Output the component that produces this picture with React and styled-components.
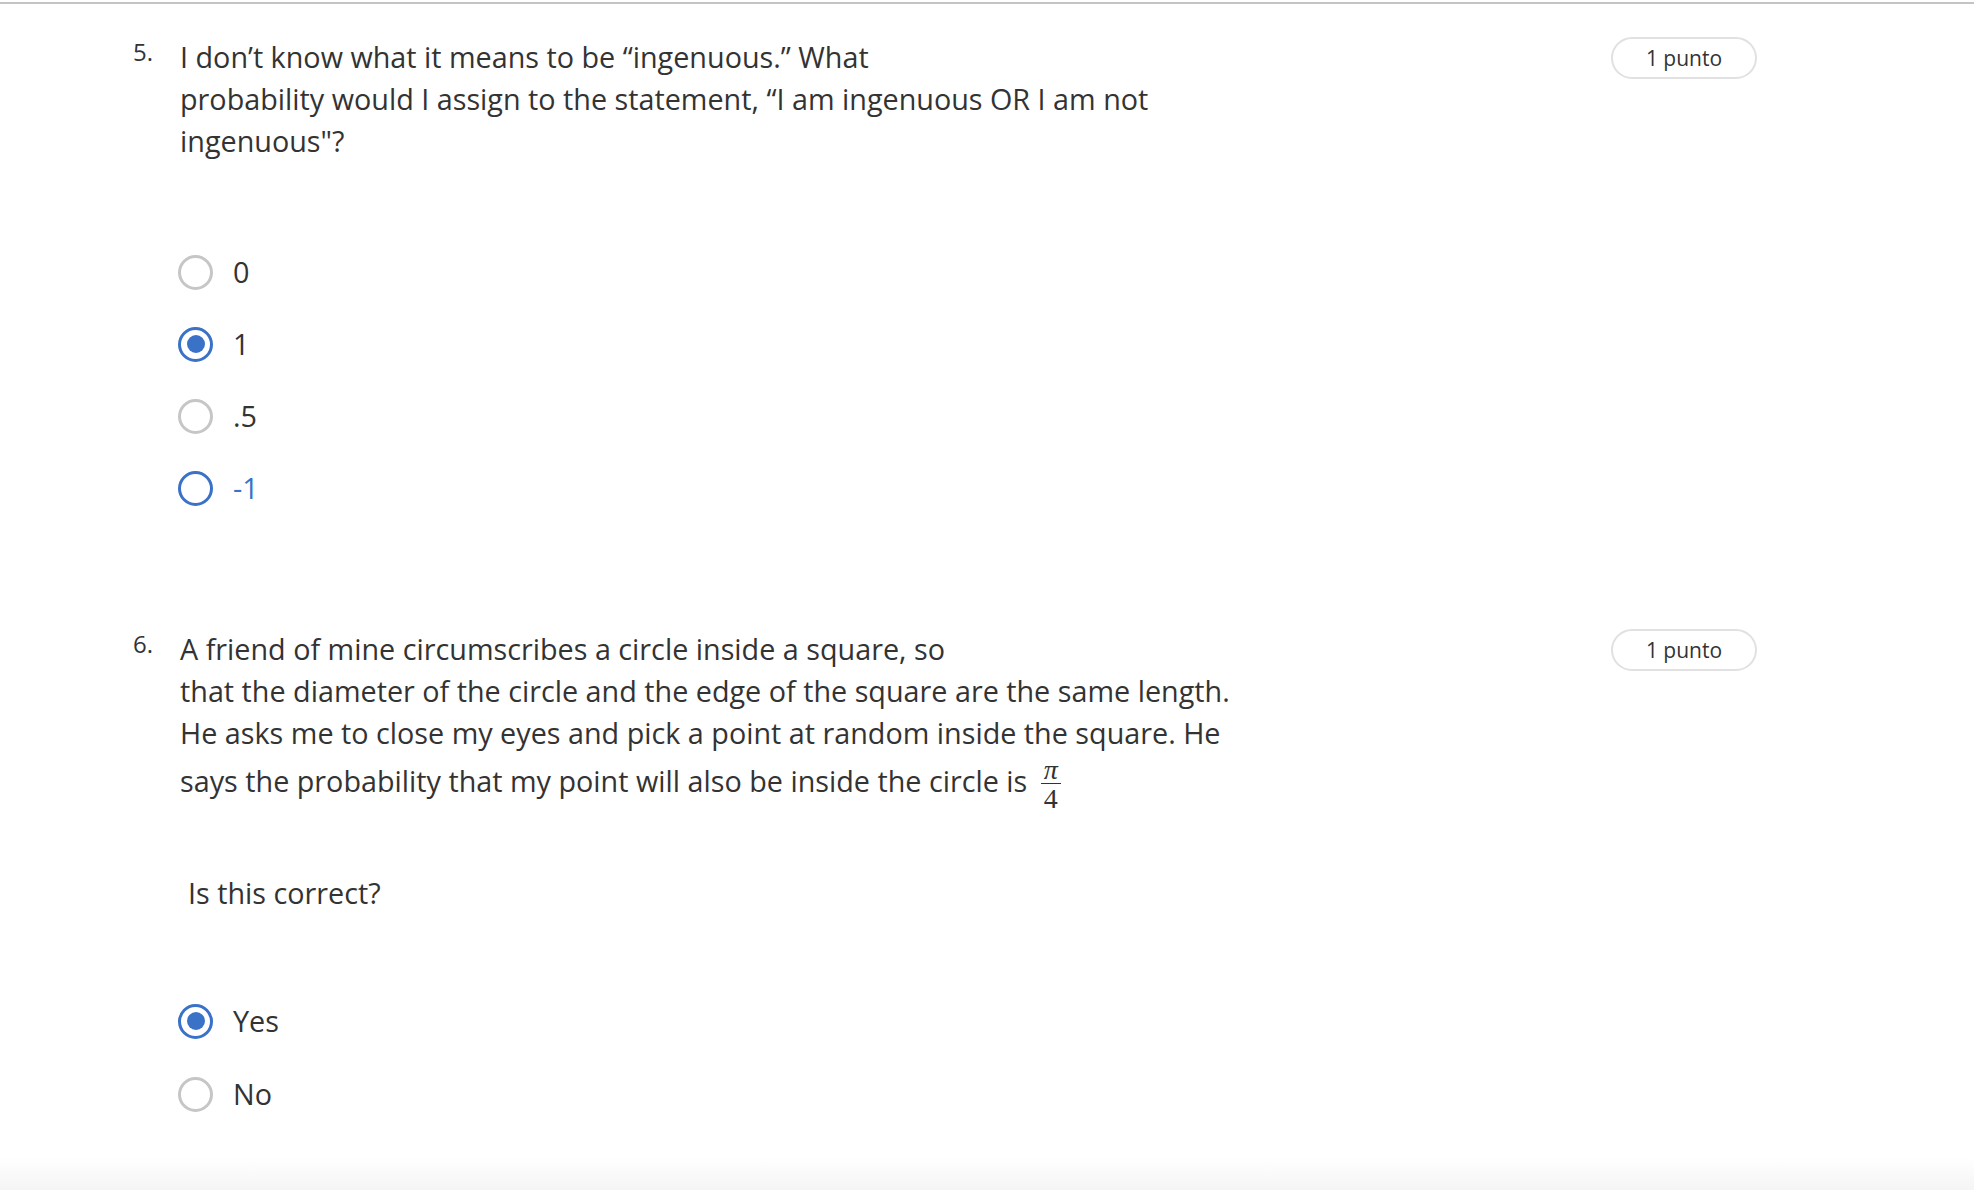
import React from 'react'
import styled, { createGlobalStyle } from 'styled-components'

const GlobalStyle = createGlobalStyle`
  html, body {
    margin: 0;
    padding: 0;
    background: #ffffff;
  }
  body {
    font-family: "Open Sans", "Noto Sans", sans-serif;
    color: #333333;
  }
`

const questions = [
    {
        num: '5.',
        lines: [
            'I don’t know what it means to be “ingenuous.” What',
            'probability would I assign to the statement, “I am ingenuous OR I am not',
            'ingenuous"?',
        ],
        options: [
            { label: '0', state: 'off' },
            { label: '1', state: 'on' },
            { label: '.5', state: 'off' },
            { label: '-1', state: 'hover' },
        ],
        rowHeight: 72,
    },
    {
        num: '6.',
        lines: [
            'A friend of mine circumscribes a circle inside a square, so',
            'that the diameter of the circle and the edge of the square are the same length.',
            'He asks me to close my eyes and pick a point at random inside the square. He',
        ],
        fractionLine: 'says the probability that my point will also be inside the circle is',
        sub: 'Is this correct?',
        options: [
            { label: 'Yes', state: 'on' },
            { label: 'No', state: 'off' },
        ],
        rowHeight: 73,
    },
]

function Fraction({ top, bottom }) {
    return (
        <Frac>
            <FracTop>{top}</FracTop>
            <FracBottom>{bottom}</FracBottom>
        </Frac>
    )
}

function Question({ q }) {
    return (
        <QuestionBlock>
            <QuestionHead>
                <Number>{q.num}</Number>
                <Prompt>
                    {q.lines.map((line, i) => (
                        <Line key={i}>{line}</Line>
                    ))}
                    {q.fractionLine && (
                        <FracLine>
                            {q.fractionLine} <Fraction top="π" bottom="4" />
                        </FracLine>
                    )}
                    {q.sub && <SubPrompt>{q.sub}</SubPrompt>}
                </Prompt>
                <Points>1 punto</Points>
            </QuestionHead>

            <Options first={!q.sub}>
                {q.options.map((opt, i) => (
                    <Option key={i} rowHeight={q.rowHeight}>
                        <Radio state={opt.state} />
                        <OptionLabel state={opt.state}>{opt.label}</OptionLabel>
                    </Option>
                ))}
            </Options>
        </QuestionBlock>
    )
}

export default function App() {
    return (
        <Page>
            <GlobalStyle />
            <TopRule />
            <Form>
                {questions.map((q) => (
                    <Question key={q.num} q={q} />
                ))}
            </Form>
        </Page>
    )
}

const Page = styled.div`
    min-height: 100vh;
    background: linear-gradient(to bottom, #ffffff calc(100% - 34px), #f4f4f4 100%);
`

const TopRule = styled.div`
    height: 2px;
    margin-top: 2px;
    background: #c4c4c4;
`

const Form = styled.div`
    width: 1624px;
    padding-left: 133px;
    padding-top: 32px;
    display: flex;
    flex-direction: column;
    gap: 104px;
`

const QuestionBlock = styled.div`
    display: flex;
    flex-direction: column;
`

const QuestionHead = styled.div`
    display: grid;
    grid-template-columns: 47px 1fr auto;
    align-items: start;
`

const Number = styled.div`
    font-size: 24px;
    line-height: 32px;
    color: #333;
`

const Prompt = styled.div`
    font-size: 28.75px;
    line-height: 42px;
    color: #333;
`

const Line = styled.div`
    white-space: nowrap;
`

const FracLine = styled.div`
    white-space: nowrap;
    line-height: 48px;
    margin-top: 3px;
`

const SubPrompt = styled.div`
    margin-top: 62px;
    padding-left: 8px;
`

const Frac = styled.span`
    display: inline-flex;
    flex-direction: column;
    align-items: center;
    vertical-align: middle;
    font-family: "Liberation Serif", "DejaVu Serif", serif;
    font-size: 28px;
    line-height: 22px;
    margin-left: 6px;
`

const FracTop = styled.span`
    font-style: italic;
    padding: 0 3px 2px;
    border-bottom: 1.5px solid #333;
`

const FracBottom = styled.span`
    padding-top: 4px;
`

const Points = styled.div`
    width: 146px;
    height: 42px;
    box-sizing: border-box;
    border: 2px solid #e1e1e1;
    border-radius: 21px;
    display: flex;
    align-items: center;
    justify-content: center;
    font-size: 21px;
    color: #333;
    margin-top: 1px;
`

const Options = styled.div`
    display: flex;
    flex-direction: column;
    padding-left: 45px;
    margin-top: ${(p) => (p.first ? 74 : 71)}px;
`

const Option = styled.div`
    height: ${(p) => p.rowHeight}px;
    display: flex;
    align-items: center;
    gap: 20px;
`

const Radio = styled.span`
    width: 35px;
    height: 35px;
    box-sizing: border-box;
    border-radius: 50%;
    border: 3px solid ${(p) => (p.state === 'off' ? '#c6c6c6' : '#3a72c7')};
    display: flex;
    align-items: center;
    justify-content: center;
    flex-shrink: 0;

    &::after {
        content: '';
        display: ${(p) => (p.state === 'on' ? 'block' : 'none')};
        width: 18px;
        height: 18px;
        border-radius: 50%;
        background: #3a72c7;
    }
`

const OptionLabel = styled.span`
    font-size: 28.75px;
    line-height: 42px;
    color: ${(p) => (p.state === 'hover' ? '#3a72c7' : '#333')};
`
